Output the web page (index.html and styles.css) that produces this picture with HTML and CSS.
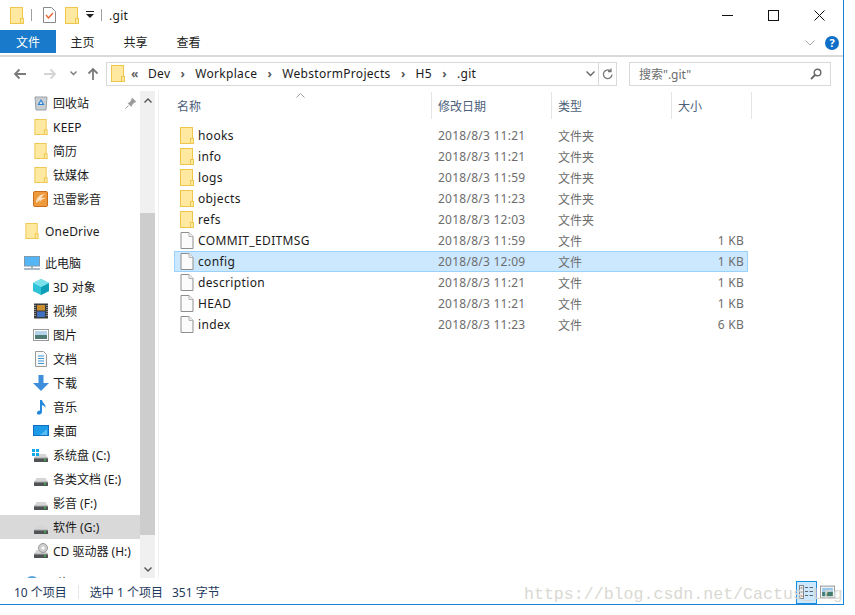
FILE: index.html
```html
<!DOCTYPE html>
<html lang="zh-CN">

<head>
    <meta charset="UTF-8">
    <title>.git</title>
    <link rel="stylesheet" href="styles.css">
</head>

<body>
    <svg class="defs" width="0" height="0">
        <symbol id="folder" viewBox="0 0 14 17">
            <rect x="0.5" y="0.5" width="12" height="16" fill="#ffe9a0" stroke="#eec64e"/>
            <rect x="10.5" y="11.5" width="3" height="5" fill="#ffe9a0" stroke="#eec64e"/>
        </symbol>
        <symbol id="file" viewBox="0 0 13 17">
            <path d="M0.5 0.5H8.5L12.5 4.5V16.5H0.5Z" fill="#fbfbfb" stroke="#8f8f8f"/>
            <path d="M8.5 0.5V4.5H12.5" fill="#f0f0f0" stroke="#b5b5b5"/>
        </symbol>
        <symbol id="hdd" viewBox="0 0 16 16">
            <path d="M3.500 7H12.500L15 11H1Z" fill="#d4d6d6"/>
            <rect x="1" y="11" width="14" height="4" fill="#4f5354"/>
            <rect x="1" y="10.500" width="14" height="1" fill="#a9adae"/>
            <rect x="11" y="12.500" width="2" height="1" fill="#3fe03f"/>
        </symbol>
    </svg>

    <div class="window">
        <div class="titlebar">
            <svg class="ico-folder"><use href="#folder"/></svg>
            <span class="qa-sep"></span>
            <svg class="qa-check" viewBox="0 0 13 16">
                <path d="M0.5 0.5H8.5L12.5 4.5V15.5H0.5Z" fill="#fff" stroke="#8a8a8a"/>
                <path d="M3 8L5.5 11L10 6" fill="none" stroke="#e8622c" stroke-width="1.3"/>
            </svg>
            <svg class="ico-folder"><use href="#folder"/></svg>
            <svg class="qa-drop" viewBox="0 0 8 8">
                <rect x="0" y="0" width="8" height="1" fill="#222"/>
                <path d="M0 3H8L4 7Z" fill="#222"/>
            </svg>
            <span class="qa-sep"></span>
            <span class="title">.git</span>
            <div class="winbtns">
                <svg viewBox="0 0 11 11"><path d="M0 5.5H11" stroke="#111"/></svg>
                <svg viewBox="0 0 11 11"><rect x="0.5" y="0.5" width="10" height="10" fill="none" stroke="#111"/></svg>
                <svg viewBox="0 0 11 11"><path d="M0.5 0.5L10.5 10.5M10.5 0.5L0.5 10.5" stroke="#111"/></svg>
            </div>
        </div>

        <div class="ribbon">
            <span class="tab tab-file">文件</span>
            <span class="tab">主页</span>
            <span class="tab">共享</span>
            <span class="tab">查看</span>
            <svg class="ribbon-chev" viewBox="0 0 10 6"><path d="M0.5 0.5L5 5L9.5 0.5" fill="none" stroke="#a8a8a8"/></svg>
            <span class="help">?</span>
        </div>

        <div class="navbar">
            <svg class="nav-arrow" viewBox="0 0 14 12"><path d="M13 6H2M6.5 1.5L2 6L6.5 10.5" fill="none" stroke="#7a7a7a" stroke-width="1.8"/></svg>
            <svg class="nav-arrow fwd" viewBox="0 0 14 12"><path d="M1 6H12M7.5 1.5L12 6L7.5 10.5" fill="none" stroke="#d4d4d4" stroke-width="1.8"/></svg>
            <svg class="nav-small" viewBox="0 0 7 5"><path d="M0.5 0.5L3.5 3.5L6.5 0.5" fill="none" stroke="#777" stroke-width="1.3"/></svg>
            <svg class="nav-up" viewBox="0 0 12 13"><path d="M6 13V2M1.5 6.5L6 2L10.500 6.5" fill="none" stroke="#7a7a7a" stroke-width="1.8"/></svg>
            <div class="address">
                <svg class="ico-folder"><use href="#folder"/></svg>
                <span class="crumb-more">«</span>
                <span class="crumb">Dev</span>
                <span class="crumb-sep">›</span>
                <span class="crumb">Workplace</span>
                <span class="crumb-sep">›</span>
                <span class="crumb">WebstormProjects</span>
                <span class="crumb-sep">›</span>
                <span class="crumb">H5</span>
                <span class="crumb-sep">›</span>
                <span class="crumb">.git</span>
                <svg class="addr-down" viewBox="0 0 9 6"><path d="M0.5 0.5L4.500 4.500L8.500 0.500" fill="none" stroke="#666" stroke-width="1.4"/></svg>
                <span class="addr-refresh">
                    <svg viewBox="0 0 11 12"><path d="M8.500 3A4.300 4.300 0 1 0 10 6.500M9 0.500V3.500H6" fill="none" stroke="#777" stroke-width="1.3"/></svg>
                </span>
            </div>
            <div class="search">
                <span>搜索".git"</span>
                <svg viewBox="0 0 12 12"><circle cx="7.500" cy="4.500" r="3.300" fill="none" stroke="#666" stroke-width="1.400"/><path d="M5 7L1 11" stroke="#666" stroke-width="1.800"/></svg>
            </div>
        </div>

        <div class="main">
            <div class="sidebar">
                <div class="tree">
                    <div class="node">
                        <svg class="node-ico" viewBox="0 0 16 16"><path d="M2 2H14L13 15H3Z" fill="#c9ced2" stroke="#9aa0a4"/><path d="M8 4L11.500 10H4.500Z" fill="#2b82cf"/><path d="M8 6L9.500 9H6.500Z" fill="#d7e8f5"/></svg>
                        <span>回收站</span>
                        <svg class="pin" viewBox="0 0 12 12"><path d="M7 0.500L11.500 5L9.500 5.500L7 8L6.500 10L2.500 6L4.500 5.500L6.500 2.500Z" fill="#9b9b9b"/><path d="M3.500 8.500L0.500 11.500" stroke="#9b9b9b"/></svg>
                    </div>
                    <div class="node"><svg class="node-ico"><use href="#folder"/></svg><span class="latin">KEEP</span></div>
                    <div class="node"><svg class="node-ico"><use href="#folder"/></svg><span>简历</span></div>
                    <div class="node"><svg class="node-ico"><use href="#folder"/></svg><span>钛媒体</span></div>
                    <div class="node">
                        <svg class="node-ico" viewBox="0 0 16 16"><rect x="0.500" y="0.500" width="14" height="15" rx="1.500" fill="#ee9a3c" stroke="#c96f1a"/><path d="M12 3C7 3 3 7 3 12L7 9L6.500 12C8 8.500 10 7.500 13 7.500C11 6.500 9.500 6.500 8 7C9 5 10.500 4 12 3Z" fill="#fbe3c2"/></svg>
                        <span>迅雷影音</span>
                    </div>
                    <div class="node top gap"><svg class="node-ico"><use href="#folder"/></svg><span class="latin">OneDrive</span></div>
                    <div class="node top gap">
                        <svg class="node-ico" viewBox="0 0 16 16"><rect x="0.500" y="1.500" width="15" height="9.500" fill="#54b6f4" stroke="#7e98ad"/><path d="M7 11H9V13H7Z" fill="#9fb2c0"/><path d="M0 14H16" stroke="#8ea2b2" stroke-width="1.500"/></svg>
                        <span>此电脑</span>
                    </div>
                    <div class="node">
                        <svg class="node-ico" viewBox="0 0 16 16"><path d="M8 0L16 4V12L8 16L0 12V4Z" fill="#2ec2d6"/><path d="M8 8L16 4V12L8 16Z" fill="#119fb8"/><path d="M8 0L16 4L8 8L0 4Z" fill="#7be2ec"/></svg>
                        <span>3D 对象</span>
                    </div>
                    <div class="node">
                        <svg class="node-ico" viewBox="0 0 16 16"><rect x="1" y="0.500" width="14" height="15" fill="#3b3b3b"/><rect x="4" y="2" width="8" height="5.500" fill="#c98f2f"/><rect x="4" y="8.500" width="8" height="5.500" fill="#3f6fc0"/><path d="M2 2V14M14 2V14" stroke="#ddd" stroke-dasharray="1 1"/></svg>
                        <span>视频</span>
                    </div>
                    <div class="node">
                        <svg class="node-ico" viewBox="0 0 16 16"><rect x="0.500" y="2.500" width="15" height="11" fill="#fff" stroke="#9a9a9a"/><rect x="2" y="4" width="12" height="4" fill="#b5d3e8"/><rect x="2" y="8" width="12" height="4" fill="#4d7b74"/></svg>
                        <span>图片</span>
                    </div>
                    <div class="node">
                        <svg class="node-ico" viewBox="0 0 16 16"><path d="M2.500 0.500H10.500L13.500 3.500V15.500H2.500Z" fill="#f8f8f8" stroke="#9a9a9a"/><path d="M5 5H11M5 7.500H11M5 10H11M5 12.500H11" stroke="#3f97d8"/></svg>
                        <span>文档</span>
                    </div>
                    <div class="node">
                        <svg class="node-ico" viewBox="0 0 16 16"><path d="M5.500 0H10.500V8H16L8 16L0 8H5.500Z" fill="#3d8fdb"/></svg>
                        <span>下载</span>
                    </div>
                    <div class="node">
                        <svg class="node-ico" viewBox="0 0 16 16"><path d="M7 1H9C9.500 4 13 5 12.500 9C11.500 7 10.500 6.500 9 6V13C9 15 6.500 16 5 15.500C3.500 15 3.500 13 5 12C5.500 11.600 6.500 11.300 7 11.500Z" fill="#2489dc"/></svg>
                        <span>音乐</span>
                    </div>
                    <div class="node">
                        <svg class="node-ico" viewBox="0 0 16 16"><rect x="0.500" y="2.500" width="15" height="10" fill="#1d9be8" stroke="#0f6fc0"/><path d="M7 12L14 6V12Z" fill="#5bbcf2"/></svg>
                        <span>桌面</span>
                    </div>
                    <div class="node">
                        <svg class="node-ico"><use href="#hdd"/></svg>
                        <span>系统盘 (C:)</span>
                        <svg class="winlogo" viewBox="0 0 7 7"><path d="M0 0H3V3H0ZM4 0H7V3H4ZM0 4H3V7H0ZM4 4H7V7H4Z" fill="#16a9e8"/></svg>
                    </div>
                    <div class="node"><svg class="node-ico"><use href="#hdd"/></svg><span>各类文档 (E:)</span></div>
                    <div class="node"><svg class="node-ico"><use href="#hdd"/></svg><span>影音 (F:)</span></div>
                    <div class="node selected"><svg class="node-ico"><use href="#hdd"/></svg><span>软件 (G:)</span></div>
                    <div class="node">
                        <svg class="node-ico" viewBox="0 0 16 16"><use href="#hdd"/><circle cx="10" cy="5" r="4.500" fill="#cfcfcf" stroke="#9a9a9a"/><circle cx="10" cy="5" r="1.500" fill="#fff"/></svg>
                        <span>CD 驱动器 (H:)</span>
                    </div>
                    <div class="node top gap">
                        <svg class="node-ico" viewBox="0 0 16 16"><circle cx="8" cy="8" r="7" fill="#5aa5dc"/></svg>
                        <span>网络</span>
                    </div>
                </div>
                <div class="scrollbar">
                    <svg class="sb-arrow" viewBox="0 0 8 5"><path d="M0.500 4.500L4 1L7.500 4.500" fill="none" stroke="#555" stroke-width="1.400"/></svg>
                    <div class="sb-track"><div class="sb-thumb"></div></div>
                    <svg class="sb-arrow" viewBox="0 0 8 5"><path d="M0.500 0.500L4 4L7.500 0.500" fill="none" stroke="#555" stroke-width="1.400"/></svg>
                </div>
            </div>

            <div class="files">
                <div class="head">
                    <span class="col-name">名称<svg class="sort" viewBox="0 0 9 5"><path d="M0.500 4.500L4.500 0.500L8.500 4.500" fill="none" stroke="#9a9a9a"/></svg></span>
                    <span class="col-date">修改日期</span>
                    <span class="col-type">类型</span>
                    <span class="col-size">大小</span>
                </div>
                <div class="row"><svg class="row-ico"><use href="#folder"/></svg><span class="name">hooks</span><span class="date">2018/8/3 11:21</span><span class="type">文件夹</span><span class="size"></span></div>
                <div class="row"><svg class="row-ico"><use href="#folder"/></svg><span class="name">info</span><span class="date">2018/8/3 11:21</span><span class="type">文件夹</span><span class="size"></span></div>
                <div class="row"><svg class="row-ico"><use href="#folder"/></svg><span class="name">logs</span><span class="date">2018/8/3 11:59</span><span class="type">文件夹</span><span class="size"></span></div>
                <div class="row"><svg class="row-ico"><use href="#folder"/></svg><span class="name">objects</span><span class="date">2018/8/3 11:23</span><span class="type">文件夹</span><span class="size"></span></div>
                <div class="row"><svg class="row-ico"><use href="#folder"/></svg><span class="name">refs</span><span class="date">2018/8/3 12:03</span><span class="type">文件夹</span><span class="size"></span></div>
                <div class="row"><svg class="row-ico"><use href="#file"/></svg><span class="name">COMMIT_EDITMSG</span><span class="date">2018/8/3 11:59</span><span class="type">文件</span><span class="size">1 KB</span></div>
                <div class="row active"><svg class="row-ico"><use href="#file"/></svg><span class="name">config</span><span class="date">2018/8/3 12:09</span><span class="type">文件</span><span class="size">1 KB</span></div>
                <div class="row"><svg class="row-ico"><use href="#file"/></svg><span class="name">description</span><span class="date">2018/8/3 11:21</span><span class="type">文件</span><span class="size">1 KB</span></div>
                <div class="row"><svg class="row-ico"><use href="#file"/></svg><span class="name">HEAD</span><span class="date">2018/8/3 11:21</span><span class="type">文件</span><span class="size">1 KB</span></div>
                <div class="row"><svg class="row-ico"><use href="#file"/></svg><span class="name">index</span><span class="date">2018/8/3 11:23</span><span class="type">文件</span><span class="size">6 KB</span></div>
            </div>
        </div>

        <div class="status">
            <span class="count">10 个项目</span>
            <span class="status-sep"></span>
            <span class="picked">选中 1 个项目</span>
            <span>351 字节</span>
            <div class="views">
                <span class="view on">
                    <svg viewBox="0 0 15 14"><rect x="0.500" y="0.500" width="4" height="13" fill="#eee" stroke="#888"/><path d="M1.500 3H3.500M1.500 7H3.500" stroke="#777"/><path d="M1.500 11H3.500" stroke="#d33"/><path d="M6 2.500H9M10.500 2.500H14M6 6.500H9M10.500 6.500H14M6 10.500H9M10.500 10.500H14" stroke="#666"/></svg>
                </span>
                <span class="view">
                    <svg viewBox="0 0 14 12"><rect x="0.500" y="0.500" width="13" height="11" fill="#fff" stroke="#9a9a9a"/><rect x="2" y="2" width="10" height="4" fill="#9cc8e8"/><rect x="2" y="6" width="10" height="4" fill="#3f7a70"/></svg>
                </span>
            </div>
        </div>
        <div class="watermark">https://blog.csdn.net/Cactus_Lrg</div>
    </div>
</body>

</html>
```

FILE: styles.css
```css
* {
    margin: 0;
    padding: 0;
    box-sizing: border-box;
}

html,
body {
    background: #fff;
    overflow: hidden;
}

body {
    font-family: "Noto Sans", "Noto Sans CJK SC", sans-serif;
    font-size: 12px;
    color: #1a1a1a;
}

svg {
    display: block;
    flex: none;
}

.defs {
    position: absolute;
}

.window {
    position: relative;
    width: 844px;
    height: 605px;
    border-right: 1px solid #1a83d4;
    border-bottom: 1px solid #1a83d4;
    overflow: hidden;
    display: flex;
    flex-direction: column;
}

.ico-folder {
    width: 14px;
    height: 17px;
}

.latin {
    letter-spacing: 0.2px;
}

/* title bar */
.titlebar {
    height: 30px;
    display: flex;
    align-items: center;
    padding-left: 10px;
}

.qa-sep {
    width: 1px;
    height: 12px;
    background: #a0a0a0;
    margin: 0 7px;
}

.qa-check {
    width: 13px;
    height: 16px;
    margin: 0 9px 0 4px;
}

.qa-drop {
    width: 8px;
    height: 8px;
    margin-left: 7px;
}

.title {
    font-size: 12px;
    letter-spacing: 0.3px;
}

.winbtns {
    margin-left: auto;
    display: flex;
    gap: 35px;
    padding-right: 18px;
}

.winbtns svg {
    width: 11px;
    height: 11px;
}

/* ribbon tabs */
.ribbon {
    height: 27px;
    display: flex;
    align-items: flex-start;
    border-bottom: 2px solid #dadada;
}

.tab {
    width: 53px;
    height: 23px;
    line-height: 25px;
    text-align: center;
    color: #222;
}

.tab-file {
    width: 56px;
    background: #1979ca;
    color: #fff;
}

.ribbon-chev {
    width: 10px;
    height: 6px;
    margin: 10px 0 0 auto;
}

.help {
    width: 14px;
    height: 14px;
    margin: 6px 4px 0 10px;
    border-radius: 50%;
    background: #0f6fc6;
    color: #fff;
    font-weight: bold;
    font-size: 11px;
    line-height: 14px;
    text-align: center;
}

/* back, forward, address, search */
.navbar {
    height: 33px;
    display: flex;
    align-items: center;
    padding-left: 13px;
}

.nav-arrow {
    width: 14px;
    height: 12px;
}

.fwd {
    margin-left: 16px;
}

.nav-small {
    width: 7px;
    height: 5px;
    margin-left: 13px;
}

.nav-up {
    width: 12px;
    height: 13px;
    margin-left: 10px;
}

.address {
    width: 511px;
    height: 24px;
    margin-left: 7px;
    border: 1px solid #d9d9d9;
    display: flex;
    align-items: center;
    padding-left: 4px;
}

.crumb-more {
    width: 23px;
    padding-left: 6px;
    color: #666;
    font-weight: bold;
}

.crumb {
    color: #1a1a1a;
    letter-spacing: 0.3px;
}

.crumb-sep {
    width: 25px;
    text-align: center;
    color: #555;
    font-weight: bold;
}

.addr-down {
    width: 9px;
    height: 6px;
    margin-left: auto;
}

.addr-refresh {
    width: 18px;
    height: 22px;
    margin-left: 3px;
    border-left: 1px solid #d9d9d9;
    display: flex;
    align-items: center;
    justify-content: center;
}

.addr-refresh svg {
    width: 11px;
    height: 12px;
}

.search {
    width: 202px;
    height: 24px;
    margin-left: 12px;
    border: 1px solid #d9d9d9;
    display: flex;
    align-items: center;
    justify-content: space-between;
    padding: 0 8px 0 9px;
    color: #6d6d6d;
}

.search svg {
    width: 12px;
    height: 12px;
}

/* left tree */
.main {
    flex: 1;
    min-height: 0;
    display: flex;
}

.sidebar {
    width: 159px;
    display: flex;
    border-right: 1px solid #f0f0f0;
    padding-top: 1px;
    overflow: hidden;
}

.tree {
    width: 140px;
    flex: none;
}

.node {
    position: relative;
    height: 24px;
    padding-left: 33px;
    display: flex;
    align-items: center;
    gap: 4px;
}

.node.top {
    padding-left: 24px;
    gap: 5px;
}

.node.gap {
    margin-top: 8px;
}

.node.selected {
    background: #d9d9d9;
}

.node-ico {
    width: 16px;
    height: 16px;
}

.pin {
    position: absolute;
    left: 125px;
    top: 6px;
    width: 12px;
    height: 12px;
}

.winlogo {
    position: absolute;
    left: 32px;
    top: 6px;
    width: 7px;
    height: 7px;
}

.scrollbar {
    width: 15px;
    flex: none;
    height: 488px;
    background: #f0f0f0;
    display: flex;
    flex-direction: column;
    align-items: center;
}

.sb-arrow {
    width: 8px;
    height: 5px;
    margin: 7px 0;
}

.sb-track {
    flex: 1;
    width: 100%;
    padding: 103px 0 25px;
}

.sb-thumb {
    height: 100%;
    background: #cdcdcd;
}

/* file list */
.files {
    flex: 1;
    padding: 2px 0 0 15px;
}

.head {
    height: 27px;
    display: grid;
    grid-template-columns: 258px 120px 120px 80px;
    margin-bottom: 6px;
    color: #4c607a;
}

.head span {
    position: relative;
    display: flex;
    align-items: center;
    padding-left: 6px;
    border-right: 1px solid #e5e5e5;
}

.col-name {
    padding-left: 3px !important;
}

.sort {
    position: absolute;
    left: 122px;
    top: 1px;
    width: 9px;
    height: 5px;
}

.row {
    width: 574px;
    height: 21px;
    display: grid;
    grid-template-columns: 18px 240px 120px 120px 66px;
    align-items: center;
    border: 1px solid transparent;
    padding-left: 5px;
    color: #6d6d6d;
}

.row.active {
    background: #cce8ff;
    border-color: #99d1ff;
}

.row-ico {
    width: 14px;
    height: 17px;
}

.name {
    color: #1a1a1a;
    letter-spacing: 0.35px;
}

.date,
.size {
    letter-spacing: 0.25px;
}

.size {
    text-align: right;
}

/* status bar */
.status {
    height: 26px;
    flex: none;
    display: flex;
    align-items: center;
    padding: 2px 0 0 14px;
    color: #1e395b;
    background: #fff;
}

.status-sep {
    width: 1px;
    height: 14px;
    background: #e8e8e8;
    margin: 0 11px;
}

.picked {
    margin-right: 9px;
}

.views {
    margin-left: auto;
    display: flex;
    align-items: center;
    padding-right: 5px;
}

.view {
    width: 21px;
    height: 23px;
    display: flex;
    align-items: center;
    justify-content: center;
}

.view svg {
    width: 15px;
    height: 14px;
}

.view.on {
    background: #cce8ff;
    border: 1px solid #1a8fdf;
}

.watermark {
    position: absolute;
    left: 524px;
    bottom: -1px;
    font-family: "Liberation Mono", monospace;
    font-size: 16.6px;
    line-height: 20px;
    color: #d9d9d2;
    white-space: nowrap;
}
```
